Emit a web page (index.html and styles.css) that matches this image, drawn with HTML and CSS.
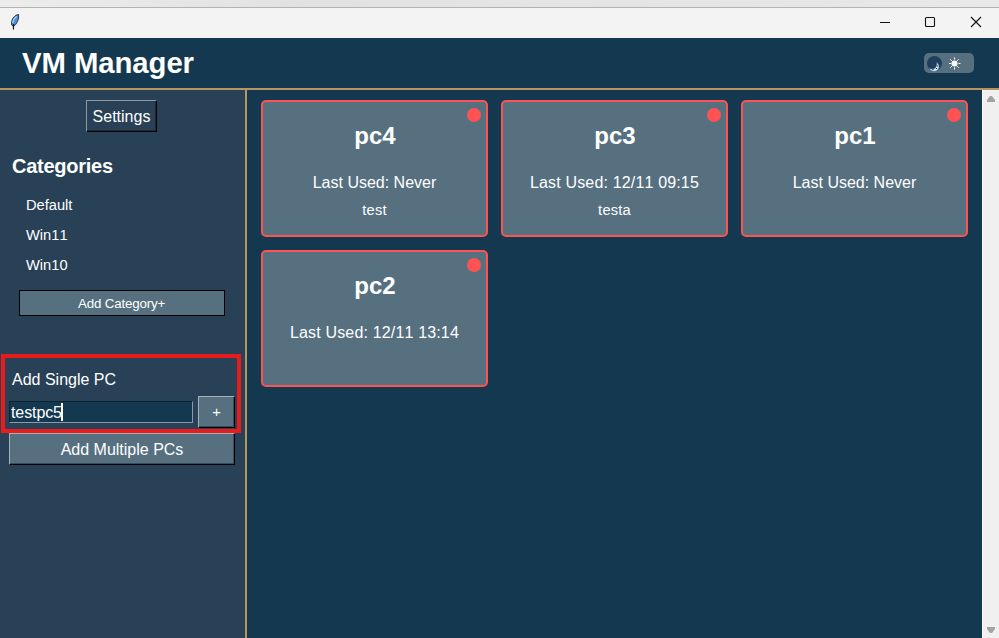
FILE: index.html
```html
<!DOCTYPE html>
<html lang="en">
<head>
<meta charset="utf-8">
<title>VM Manager</title>
<link rel="stylesheet" href="styles.css">
</head>
<body>
<div class="backdrop"></div>
<div class="titlebar">
  <svg class="feather" width="12" height="18" viewBox="0 0 12 18">
    <path d="M9.6 1.5 L7 2.2 L4 5 L2.6 8.5 L2.6 12 L4.2 13.3 L6.6 11.6 L8.6 8.4 L9.6 5 Z" fill="#4a8fe0" stroke="#26292e" stroke-width=".9"/>
    <path d="M7.6 3.4 L4.8 6.4 L3.6 10" fill="none" stroke="#b9dcff" stroke-width="1.1"/>
    <path d="M4.6 11 L4.4 16.4" fill="none" stroke="#111" stroke-width="1.2"/>
  </svg>
  <svg class="controls" width="110" height="14" viewBox="0 0 110 14" fill="none" stroke="#111" stroke-width="1">
    <path d="M0 7.5H10"/>
    <rect x="45.5" y="2.5" width="9" height="9" rx="1" stroke-width="1.1"/>
    <path d="M91 2 L101 12 M101 2 L91 12" stroke-width="1.1"/>
  </svg>
</div>
<header class="header">
  <h1>VM Manager</h1>
  <svg class="toggle" width="50" height="20" viewBox="0 0 50 20">
    <rect width="50" height="20" rx="5" fill="#567080"/>
    <circle cx="10.5" cy="10.5" r="7.5" fill="#213d5c"/>
    <path d="M12.8 9.5 C16.5 12 15.5 18 10.5 18.3 C8 18.4 6 17.2 5.5 15.5 C9 17 13.5 15.5 12.8 9.5Z" fill="#dfe6ea" stroke="#3978a8" stroke-width=".6"/>
    <path d="M8.5 16.5h1M12 15.5h1M13.5 12.5v1" stroke="#253950" stroke-width="1"/>
    <circle cx="30.5" cy="10.5" r="3" fill="#fff"/>
    <path d="M30.5 4.5V6.5M30.5 14.5V16.5M25 10.5H27M34.5 10.5H36.5M26.3 6.3l1.5 1.5M34.7 6.3l-1.5 1.5M26.3 14.7l1.5-1.5M34.7 14.7l-1.5-1.5" stroke="#fff" stroke-width="1"/>
  </svg>
</header>
<div class="body">
  <aside class="sidebar">
    <button class="btn settings">Settings</button>
    <h2>Categories</h2>
    <ul class="categories"><li>Default</li><li>Win11</li><li>Win10</li></ul>
    <button class="add-category">Add Category+</button>
    <section class="single">
      <label for="pc">Add Single PC</label>
      <div class="row">
        <div class="entry" id="pc">testpc5<span class="caret"></span></div>
        <button class="btn plus">+</button>
      </div>
    </section>
    <button class="btn multiple">Add Multiple PCs</button>
  </aside>
  <main class="grid">
    <article class="card"><i class="dot"></i><h3>pc4</h3><p class="used">Last Used: Never</p><p class="note">test</p></article>
    <article class="card"><i class="dot"></i><h3>pc3</h3><p class="used dated">Last Used: 12/11 09:15</p><p class="note">testa</p></article>
    <article class="card"><i class="dot"></i><h3>pc1</h3><p class="used">Last Used: Never</p></article>
    <article class="card"><i class="dot"></i><h3>pc2</h3><p class="used dated">Last Used: 12/11 13:14</p></article>
  </main>
  <div class="scrollbar">
    <svg width="8" height="6" viewBox="0 0 8 6"><path d="M3 0H5L8 4V6H0V4Z" fill="#a3a3a3"/></svg>
    <svg width="8" height="6" viewBox="0 0 8 6"><path d="M3 6H5L8 2V0H0V2Z" fill="#a3a3a3"/></svg>
  </div>
</div>
</body>
</html>
```
FILE: styles.css
```css
* { box-sizing: border-box; margin: 0; padding: 0; }
body {
  width: 999px; height: 638px; overflow: hidden;
  display: flex; flex-direction: column;
  font-family: "Liberation Sans", Arial, sans-serif;
  font-size: 16px; color: #fff; background: #14384f;
  font-kerning: none;
}
button { font-family: inherit; color: inherit; font-kerning: none; }
.backdrop { height: 8px; flex: none; background: linear-gradient(90deg, #ececec, #e2e2e2 30%, #e8e8e8); border-bottom: 1px solid #b3b3b3; }
.titlebar { height: 30px; flex: none; background: #f3f3f3; display: flex; justify-content: space-between; align-items: flex-start; padding: 5px 9px 0; }
.controls { margin: 2px 0 0; }
.header { height: 52px; flex: none; border-bottom: 2px solid #b8955f; display: flex; justify-content: space-between; padding: 0 25px 0 22px; }
h1 { font-size: 29.33px; line-height: 50px; letter-spacing: -.08px; }
.toggle { margin-top: 15px; }
.body { flex: 1; display: flex; min-height: 0; }
.sidebar { width: 247px; flex: none; background: #284156; border-right: 2px solid #b8955f; display: flex; flex-direction: column; align-items: flex-start; padding-top: 10px; }
.btn { height: 32px; font-size: 16px; background: #567080; border: 1px solid; border-color: #a3b1b9 #000 #000 #a3b1b9; box-shadow: inset -1px -1px #3a4c57; text-align: center; padding-top: 2px; }
.settings { width: 71px; margin-left: 86px; background: #284156; border-color: #8d99a3 #000 #000 #8d99a3; box-shadow: inset -1px -1px #1b2c3a; }
h2 { font-size: 20px; line-height: 24px; margin: 22px 0 0 12px; letter-spacing: -.25px; }
.categories { list-style: none; margin: 12px 0 0 26px; font-size: 14.67px; line-height: 30px; }
.add-category { width: 206px; height: 26px; margin: 10px 0 0 19px; padding-right: 1px; font-size: 13.33px; letter-spacing: -.17px; background: #567080; border: 1px solid #000; }
.single { width: 240px; height: 79px; margin: 38px 0 0 1px; border: 4px solid #e81c1c; padding: 13px 2px 0 4px; position: relative; z-index: 1; }
.single label { display: block; line-height: 18px; padding-left: 3px; }
.row { display: flex; justify-content: space-between; align-items: center; margin-top: 7px; }
.entry { width: 184px; height: 22px; background: #14384f; border: 1px solid; border-color: #0c2230 #8a9ba7 #8a9ba7 #0c2230; padding-left: 1px; line-height: 21px; letter-spacing: -.1px; display: flex; }
.caret { width: 2px; height: 18px; background: #fff; margin: 1px 0 0 -1px; }
.plus { width: 37px; font-size: 14.67px; padding-top: 0; }
.multiple { width: 226px; margin-left: 9px; }
.grid { width: 735px; flex: none; display: grid; grid-template-columns: repeat(3, 227px); grid-auto-rows: 137px; gap: 13px; padding: 10px 0 0 14px; align-content: start; }
.card { position: relative; background: #567080; border: 2px solid #ff5252; border-radius: 5px; text-align: center; padding-top: 20px; }
.dot { position: absolute; top: 6px; right: 5px; width: 14px; height: 14px; border-radius: 50%; background: #ff5252; }
h3 { font-size: 24px; line-height: 28px; padding-left: 1px; }
.used { line-height: 18px; margin-top: 24px; }
.dated { letter-spacing: .16px; }
.note { font-size: 14.67px; line-height: 18px; margin-top: 9px; letter-spacing: .2px; }
.scrollbar { width: 17px; background: #f0f0f0; border-left: 1px solid #fff; display: flex; flex-direction: column; align-items: center; justify-content: space-between; padding: 6px 0 5px; }
```
